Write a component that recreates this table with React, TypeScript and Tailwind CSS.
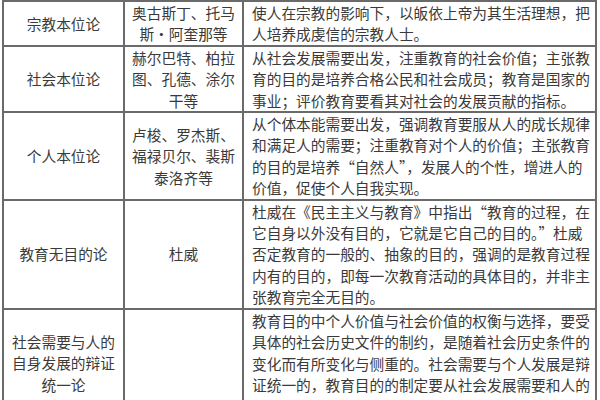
import React from "react";

type Row = {
  theory: string[];
  people: string[];
  desc: string[];
  tall?: boolean;
};

const rows: Row[] = [
  {
    theory: ["宗教本位论"],
    people: ["奥古斯丁、托马", "斯·阿奎那等"],
    desc: ["使人在宗教的影响下，以皈依上帝为其生活理想，把", "人培养成虔信的宗教人士。"],
  },
  {
    theory: ["社会本位论"],
    people: ["赫尔巴特、柏拉", "图、孔德、涂尔", "干等"],
    desc: [
      "从社会发展需要出发，注重教育的社会价值；主张教",
      "育的目的是培养合格公民和社会成员；教育是国家的",
      "事业；评价教育要看其对社会的发展贡献的指标。",
    ],
  },
  {
    theory: ["个人本位论"],
    people: ["卢梭、罗杰斯、", "福禄贝尔、裴斯", "泰洛齐等"],
    desc: [
      "从个体本能需要出发，强调教育要服从人的成长规律",
      "和满足人的需要；注重教育对个人的价值；主张教育",
      "的目的是培养“自然人”，发展人的个性，增进人的",
      "价值，促使个人自我实现。",
    ],
  },
  {
    theory: ["教育无目的论"],
    people: ["杜威"],
    desc: [
      "杜威在《民主主义与教育》中指出“教育的过程，在",
      "它自身以外没有目的，它就是它自己的目的。”杜威",
      "否定教育的一般的、抽象的目的，强调的是教育过程",
      "内有的目的，即每一次教育活动的具体目的，并非主",
      "张教育完全无目的。",
    ],
  },
  {
    theory: ["社会需要与人的", "自身发展的辩证", "统一论"],
    people: [],
    desc: [
      "教育目的中个人价值与社会价值的权衡与选择，要受",
      "具体的社会历史文件的制约，是随着社会历史条件的",
      "变化而有所变化与侧重的。社会需要与个人发展是辩",
      "证统一的，教育目的的制定要从社会发展需要和人的",
    ],
    tall: true,
  },
];

function Lines({ lines }: { lines: string[] }) {
  return (
    <>
      {lines.map((l, i) => (
        <span key={i} className="block whitespace-nowrap">
          {l}
        </span>
      ))}
    </>
  );
}

export default function App() {
  return (
    <div className="w-[600px] h-[400px] overflow-hidden bg-white">
      <div
        className="ml-[2px] grid grid-cols-[119px_117px_351px] gap-[2px] bg-[#6a6a6a] p-[2px] w-max text-[14.7px] leading-[21.4px] text-[#3a3a3a]"
        style={{ fontFamily: '"Noto Sans CJK SC", "Noto Sans", sans-serif' }}
      >
        {rows.map((r, i) => (
          <React.Fragment key={i}>
            <div className="bg-white flex flex-col items-center justify-center text-center">
              <Lines lines={r.theory} />
            </div>
            <div className="bg-white flex flex-col items-center justify-center text-center">
              <Lines lines={r.people} />
            </div>
            <div className={r.tall ? "bg-white pl-[8px] min-h-[107px]" : "bg-white pl-[8px]"}>
              <Lines lines={r.desc} />
            </div>
          </React.Fragment>
        ))}
      </div>
    </div>
  );
}
